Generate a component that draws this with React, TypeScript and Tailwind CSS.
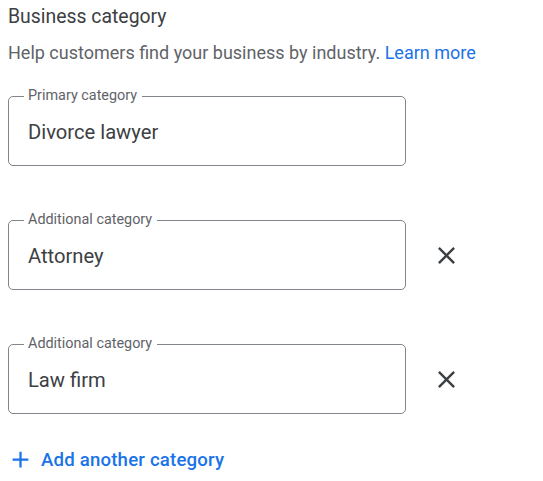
const font = { fontFamily: 'Roboto, "Noto Sans", sans-serif' }

function CloseIcon() {
  return (
    <svg width="29" height="29" viewBox="0 0 24 24" fill="#3c4043">
      <path d="M19 6.41 17.59 5 12 10.59 6.41 5 5 6.41 10.59 12 5 17.59 6.41 19 12 13.41 17.59 19 19 17.59 13.41 12z" />
    </svg>
  )
}

function PlusIcon() {
  return (
    <svg width="27" height="27" viewBox="0 0 24 24" fill="#1a73e8">
      <path d="M19 13h-6v6h-2v-6H5v-2h6V5h2v6h6v2z" />
    </svg>
  )
}

function CategoryField({ label, value, removable }: { label: string; value: string; removable?: boolean }) {
  return (
    <div className="flex items-center">
      <fieldset className="w-[398px] rounded-[5px] border border-[#80868b] m-0 p-0">
        <legend className="ml-[15px] pl-[4px] pr-[5px] text-[14.4px] leading-[16px] text-[#5f6368]">{label}</legend>
        <div className="pl-[19px] pt-[16px] pb-[21px] text-[20.2px] leading-[24px] text-[#3c4043]">{value}</div>
      </fieldset>
      {removable && (
        <button className="ml-[26px] pt-[9px] flex items-center justify-center">
          <CloseIcon />
        </button>
      )}
    </div>
  )
}

export default function App() {
  return (
    <div className="w-[543px] h-[481px] bg-white px-[8px] pt-[5px]" style={font}>
      <h2 className="text-[19.4px] leading-[24px] text-[#3c4043]">Business category</h2>
      <p className="mt-[12px] text-[18px] leading-[24px] text-[#5f6368]">
        Help customers find your business by industry.{' '}
        <a className="text-[#1a73e8]">Learn more</a>
      </p>

      <div className="mt-[23px] flex flex-col gap-[46px]">
        <CategoryField label="Primary category" value="Divorce lawyer" />
        <CategoryField label="Additional category" value="Attorney" removable />
        <CategoryField label="Additional category" value="Law firm" removable />
      </div>

      <button className="mt-[32px] -ml-[1px] flex items-center gap-[7px] text-[18.6px] leading-[24px] font-medium tracking-[0.2px] text-[#1a73e8]">
        <PlusIcon />
        Add another category
      </button>
    </div>
  )
}
